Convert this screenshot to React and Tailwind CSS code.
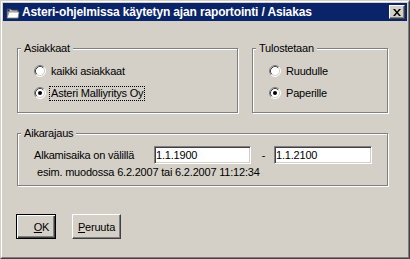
import React from "react";

const etched =
  "relative border border-[#808080] shadow-[inset_1px_1px_0_#fff,1px_1px_0_#fff]";

function Group({ label, className, children }) {
  return (
    <div className={`${etched} ${className}`}>
      <span className="absolute -top-[7px] left-[3px] bg-[#d4d0c8] px-[3px] leading-[13px]">
        {label}
      </span>
      {children}
    </div>
  );
}

function Radio({ checked }) {
  return (
    <svg width="12" height="12" viewBox="0 0 12 12" className="shrink-0">
      <circle cx="6" cy="6" r="5" fill="#fff" />
      <path d="M2.11 9.89A5.5 5.5 0 0 1 9.89 2.11" stroke="#808080" fill="none" />
      <path d="M2.82 9.18A4.5 4.5 0 0 1 9.18 2.82" stroke="#404040" fill="none" />
      <path d="M9.89 2.11A5.5 5.5 0 0 1 2.11 9.89" stroke="#fff" fill="none" />
      <path d="M9.18 2.82A4.5 4.5 0 0 1 2.82 9.18" stroke="#d4d0c8" fill="none" />
      {checked && <circle cx="6" cy="6" r="2" fill="#000" />}
    </svg>
  );
}

function Option({ checked, focused, children }) {
  return (
    <div className="flex h-[16px] items-center">
      <Radio checked={checked} />
      {focused ? (
        <span className="ml-[3px] border border-dotted border-black px-px leading-[13px]">
          {children}
        </span>
      ) : (
        <span className="ml-[5px] leading-[13px]">{children}</span>
      )}
    </div>
  );
}

function TextBox({ value, className }) {
  return (
    <div
      className={`flex h-[18px] items-center border border-t-[#808080] border-l-[#808080] border-r-white border-b-white bg-white pl-px leading-[13px] shadow-[inset_1px_1px_0_#404040,inset_-1px_-1px_0_#d4d0c8] ${className}`}
    >
      {value}
    </div>
  );
}

export default function App() {
  return (
    <div
      className="h-[259px] w-[410px] border border-t-[#d4d0c8] border-l-[#d4d0c8] border-r-[#404040] border-b-[#404040] bg-[#d4d0c8] text-[11px] tracking-[-0.2px] text-black"
      style={{ fontFamily: '"Liberation Sans", Arial, sans-serif' }}
    >
      <div className="flex h-full flex-col border border-t-white border-l-white border-r-[#808080] border-b-[#808080] p-px">
        {/* Title bar */}
        <div className="flex h-[18px] shrink-0 items-center bg-[#0a246a] pl-[2px] pr-[2px] text-white">
          <svg width="16" height="16" viewBox="0 0 16 16" className="shrink-0">
            <path d="M2 5h4l1 1h6v8H2z" fill="#c0c0c0" stroke="#404040" strokeWidth="1" />
            <path d="M4 8h10l-1 6H2z" fill="#fff" stroke="#808080" strokeWidth="0.8" />
            <rect x="2.5" y="5.5" width="2" height="2" fill="#0a246a" />
          </svg>
          <span className="ml-px text-[12px] font-bold leading-[14px] tracking-[-0.15px]">
            Asteri-ohjelmissa käytetyn ajan raportointi / Asiakas
          </span>
          <div className="ml-auto flex h-[14px] w-[16px] items-center justify-center border border-t-white border-l-white border-r-[#404040] border-b-[#404040] bg-[#d4d0c8] shadow-[inset_-1px_-1px_0_#808080]">
            <svg width="8" height="7" viewBox="0 0 8 7">
              <path d="M0 0h2l2 2.5L6 0h2L5 3.5 8 7H6L4 4.5 2 7H0l3-3.5z" fill="#000" />
            </svg>
          </div>
        </div>

        {/* Body */}
        <div className="flex flex-1 flex-col pl-[14px] pt-[27px]">
          <div className="flex">
            <Group label="Asiakkaat" className="h-[65px] w-[221px]">
              <div className="flex flex-col gap-[6px] pl-[16px] pt-[14px]">
                <Option>kaikki asiakkaat</Option>
                <Option checked focused>
                  Asteri Malliyritys Oy
                </Option>
              </div>
            </Group>
            <Group label="Tulostetaan" className="ml-[14px] h-[65px] w-[136px]">
              <div className="flex flex-col gap-[6px] pl-[16px] pt-[14px]">
                <Option>Ruudulle</Option>
                <Option checked>Paperille</Option>
              </div>
            </Group>
          </div>

          <Group label="Aikarajaus" className="mt-[20px] h-[53px] w-[371px]">
            <div className="mt-[12px] flex h-[18px] items-center pl-[16px]">
              <span className="w-[120px] leading-[13px]">Alkamisaika on välillä</span>
              <TextBox value="1.1.1900" className="w-[97px]" />
              <span className="w-[23px] pl-[2px] text-center leading-[13px]">-</span>
              <TextBox value="1.1.2100" className="w-[98px]" />
            </div>
            <div className="mt-[2px] pl-[19px] leading-[13px]">
              esim. muodossa 6.2.2007 tai 6.2.2007 11:12:34
            </div>
          </Group>

          <div className="-ml-px mt-[28px] flex gap-[16px]">
            <button className="flex h-[25px] w-[40px] items-center justify-center border border-black bg-[#d4d0c8] pl-[11px] pt-[2px] leading-[13px] shadow-[inset_1px_1px_0_#fff,inset_-1px_-1px_0_#404040,inset_-2px_-2px_0_#808080]">
              <span>
                <u>O</u>K
              </span>
            </button>
            <button className="flex h-[25px] w-[49px] items-center justify-center border border-t-white border-l-white border-r-[#404040] border-b-[#404040] bg-[#d4d0c8] pt-[2px] leading-[13px] shadow-[inset_-1px_-1px_0_#808080]">
              <span>
                <u>P</u>eruuta
              </span>
            </button>
          </div>
        </div>
      </div>
    </div>
  );
}
